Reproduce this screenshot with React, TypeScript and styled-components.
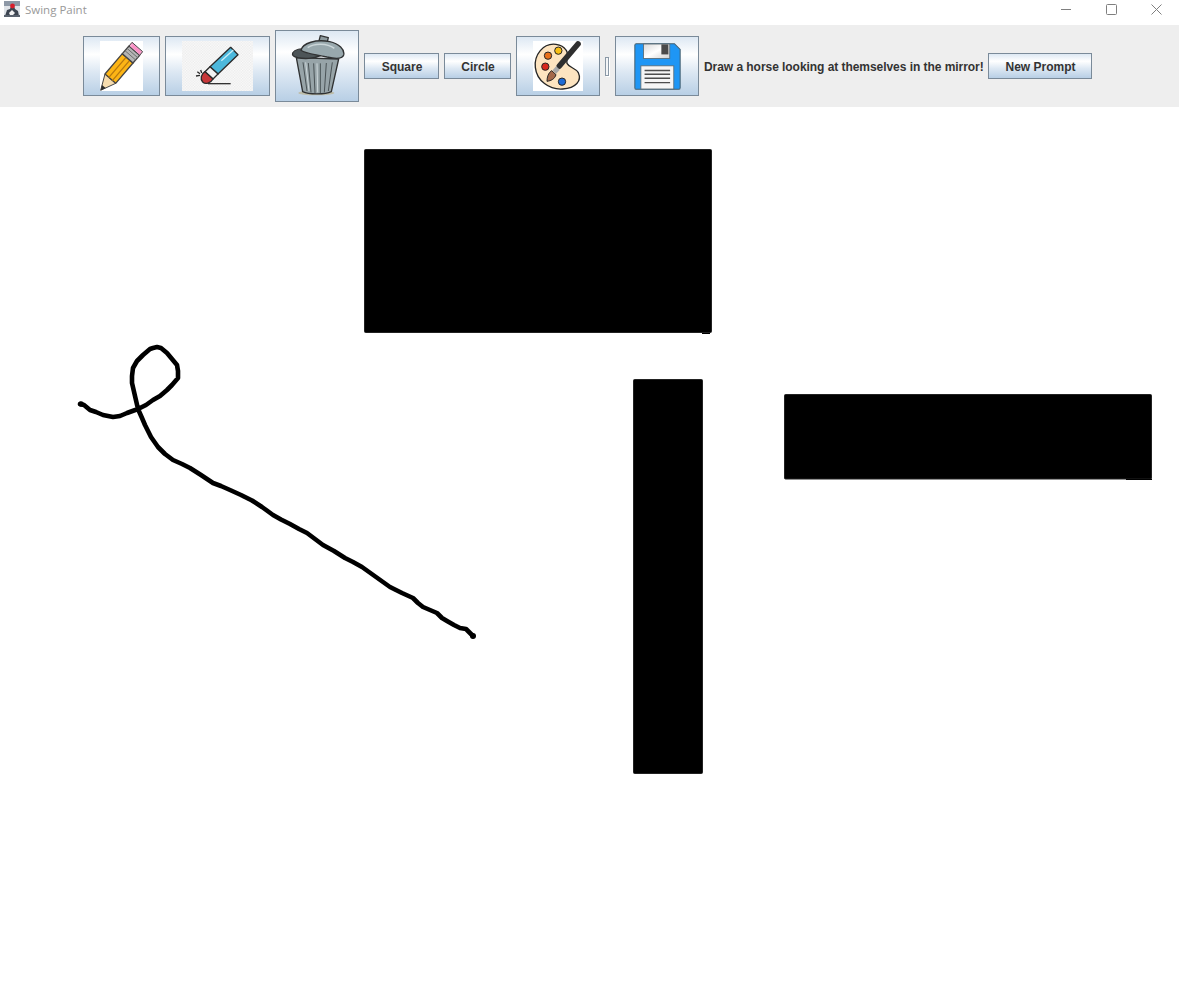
import styled, { createGlobalStyle } from "styled-components";

const GlobalStyle = createGlobalStyle`
  html, body {
    margin: 0;
    padding: 0;
    background: #ffffff;
  }
`;

const Frame = styled.div`
  width: 1179px;
  height: 982px;
  display: flex;
  flex-direction: column;
  overflow: hidden;
  background: #ffffff;
`;

const TitleBar = styled.div`
  height: 25px;
  flex: none;
  display: flex;
  align-items: center;
  padding: 0 0 7px 4px;
  box-sizing: border-box;
  background: #ffffff;
`;

const TitleText = styled.span`
  margin: 2px 0 0 5px;
  font-family: "Open Sans", "Noto Sans", sans-serif;
  font-size: 11.5px;
  line-height: 16px;
  color: #999999;
`;

const WindowControls = styled.div`
  margin-left: auto;
  display: flex;
  align-items: center;
  padding-right: 17px;
  gap: 34px;
`;

const Toolbar = styled.div`
  height: 82px;
  flex: none;
  display: flex;
  align-items: center;
  gap: 5px;
  padding-left: 83px;
  box-sizing: border-box;
  background: #eeeeee;
`;

const MetalButton = styled.button<{ $w: number; $h: number }>`
  width: ${(p) => p.$w}px;
  height: ${(p) => p.$h}px;
  flex: none;
  display: flex;
  align-items: center;
  justify-content: center;
  padding: 0;
  box-sizing: border-box;
  border: 1px solid #7a8a99;
  background: linear-gradient(#dde8f3 0%, #ffffff 30%, #dde8f3 60%, #b8cfe5 100%);
  font-family: "Liberation Sans", Arial, sans-serif;
  font-size: 12px;
  font-weight: 700;
  color: #333333;
`;

const TextButton = styled(MetalButton)`
  padding: 2px 0 0 1px;
`;

const Sliver = styled.div`
  width: 4px;
  height: 19px;
  flex: none;
  margin-right: 1px;
  box-sizing: border-box;
  border: 1px solid #8a98a6;
  background: #f4f6f8;
  box-shadow: 1px 1px 0 #ffffff;
`;

const Prompt = styled.span`
  flex: none;
  width: 279px;
  padding-top: 2px;
  font-family: "Liberation Sans", Arial, sans-serif;
  font-size: 12px;
  font-weight: 700;
  line-height: 16px;
  letter-spacing: -0.05px;
  white-space: nowrap;
  color: #333333;
`;

const Canvas = styled.svg`
  display: block;
  flex: 1;
  width: 1179px;
  background: #ffffff;
`;

const AppIcon = () => (
  <svg width="16" height="16" viewBox="0 0 16 16">
    <rect width="16" height="16" fill="#dfe3e8" />
    <rect x="0" y="0" width="16" height="5" fill="#8d98a6" />
    <path d="M1 15 L3 9 L6 8 L7 5 L10 5 L11 8 L14 10 L15 15 Z" fill="#3c4450" />
    <path d="M5 12 L8 9 L11 12 L9 14 L6 14 Z" fill="#f2f2f2" />
    <circle cx="8.5" cy="5" r="2.4" fill="#d81e2c" />
    <rect x="0" y="14" width="16" height="2" fill="#59626e" />
  </svg>
);

const MinimizeIcon = () => (
  <svg width="11" height="11" viewBox="0 0 11 11">
    <path d="M0 5.5 H10" stroke="#7f7f7f" strokeWidth="1" />
  </svg>
);

const MaximizeIcon = () => (
  <svg width="11" height="11" viewBox="0 0 11 11">
    <rect x="0.5" y="0.5" width="10" height="10" rx="1" fill="none" stroke="#7f7f7f" />
  </svg>
);

const CloseIcon = () => (
  <svg width="11" height="11" viewBox="0 0 11 11">
    <path d="M0.5 0.5 L10.5 10.5 M10.5 0.5 L0.5 10.5" stroke="#7f7f7f" strokeWidth="1" />
  </svg>
);

const PencilIcon = () => (
  <svg width="43" height="50" viewBox="0 0 129 150">
    <rect width="129" height="150" fill="#ffffff" />
    <path d="M15 99 L47 127 L2 148 Z" fill="#f6dcae" stroke="#444444" strokeWidth="3" strokeLinejoin="round" />
    <path d="M2 148 L6 132 L17 141 Z" fill="#2b2b2b" />
    <path d="M15 99 L67 38 L99 66 L47 127 Z" fill="#fdb515" stroke="#444444" strokeWidth="4" strokeLinejoin="round" />
    <path d="M26 110 L78 49 M37 119 L89 58" stroke="#b87a10" strokeWidth="4" />
    <path d="M67 38 L87 15 L119 43 L99 66 Z" fill="#b5b5b5" stroke="#444444" strokeWidth="4" strokeLinejoin="round" />
    <path d="M75 29 L107 57 M81 22 L113 50" stroke="#6e6e6e" strokeWidth="3" />
    <path d="M87 15 L96 4 L128 32 L119 43 Z" fill="#fba3cf" stroke="#444444" strokeWidth="3" strokeLinejoin="round" />
    <path d="M100 10 L122 30 L118 38 L96 17 Z" fill="#f97dbb" opacity="0.5" />
  </svg>
);

const EraserIcon = () => (
  <svg width="71" height="50" viewBox="52 33 213 150">
    <defs>
      <pattern id="checker" width="8" height="8" patternUnits="userSpaceOnUse">
        <rect width="8" height="8" fill="#fbfbfb" />
        <rect width="4" height="4" fill="#ebebeb" />
        <rect x="4" y="4" width="4" height="4" fill="#ebebeb" />
      </pattern>
    </defs>
    <rect x="52" y="33" width="213" height="150" fill="url(#checker)" />
    <path d="M130 161 H198" stroke="#333333" strokeWidth="4" />
    <path d="M198 52 L220 74 L160 132 L136 110 Z" fill="#4cb8dc" stroke="#2a2a2a" strokeWidth="4" strokeLinejoin="round" />
    <path d="M170 92 L206 60" stroke="#c9eef9" strokeWidth="4" />
    <path d="M136 110 L160 132 L145 147 L121 125 Z" fill="#f2f2f2" stroke="#2a2a2a" strokeWidth="4" strokeLinejoin="round" />
    <path d="M121 125 L145 147 C138 160 122 164 114 156 C106 148 109 132 121 125 Z" fill="#c8383a" stroke="#2a2a2a" strokeWidth="4" strokeLinejoin="round" />
    <path d="M94 138 L106 136 M98 125 L106 131 M108 120 L111 129" stroke="#2a2a2a" strokeWidth="4" />
  </svg>
);

const TrashIcon = () => (
  <svg width="55" height="62" viewBox="59 30 165 186">
    <ellipse cx="138" cy="204" rx="54" ry="7" fill="#bdbdaa" />
    <path d="M78 98 L205 102 L183 200 C165 209 115 209 97 200 Z" fill="#97a4a8" stroke="#303233" strokeWidth="4" strokeLinejoin="round" />
    <path d="M98 112 L110 198 M114 114 L122 202 M130 115 L134 204 M150 115 L150 204 M168 114 L162 202 M186 112 L174 198" stroke="#4a5356" strokeWidth="3" />
    <path d="M106 112 L116 198 M140 115 L142 202" stroke="#ccd6d9" strokeWidth="3" />
    <path d="M67 84 C74 72 92 70 108 74 L150 92 C130 102 100 102 82 98 C72 95 64 92 67 84 Z" fill="#4d5558" stroke="#303233" strokeWidth="4" strokeLinejoin="round" />
    <path d="M146 48 L150 32 L174 38 L170 54" fill="#8d9a9f" stroke="#303233" strokeWidth="4" strokeLinejoin="round" />
    <path d="M92 76 C96 54 138 42 178 50 C206 56 224 74 220 90 C216 102 196 102 170 96 C140 88 108 88 92 76 Z" fill="#98a8ad" stroke="#303233" strokeWidth="4" strokeLinejoin="round" />
    <path d="M112 68 C132 54 170 54 192 70" fill="none" stroke="#cbd6d9" strokeWidth="5" />
  </svg>
);

const PaletteIcon = () => (
  <svg width="50" height="50" viewBox="63 33 150 150">
    <rect x="63" y="33" width="150" height="150" fill="#ffffff" />
    <path
      d="M132 43 C93 38 66 75 70 112 C74 152 112 180 152 177 C192 174 210 152 199 128 C192 114 172 114 165 100 C162 85 172 72 162 60 C155 49 145 45 132 43 Z"
      fill="#fde4c0"
      stroke="#262626"
      strokeWidth="4"
      strokeLinejoin="round"
    />
    <circle cx="108" cy="77" r="11" fill="#e8701a" stroke="#262626" strokeWidth="3" />
    <circle cx="139" cy="62" r="11" fill="#f9c015" stroke="#262626" strokeWidth="3" />
    <circle cx="100" cy="110" r="11" fill="#d8281e" stroke="#262626" strokeWidth="3" />
    <circle cx="150" cy="155" r="11" fill="#1e6bd6" stroke="#262626" strokeWidth="3" />
    <path d="M198 42 L142 108" stroke="#2f2f2f" strokeWidth="17" strokeLinecap="round" />
    <path d="M138 114 L127 126" stroke="#a9a9a9" strokeWidth="15" />
    <path d="M119 122 L132 134 C128 147 118 152 105 154 C105 141 109 128 119 122 Z" fill="#a5694a" stroke="#262626" strokeWidth="3" strokeLinejoin="round" />
  </svg>
);

const SaveIcon = () => (
  <svg width="47" height="47" viewBox="102 39 139 140">
    <defs>
      <linearGradient id="shutter" x1="0" y1="0" x2="1" y2="1">
        <stop offset="0" stopColor="#d8d8d8" />
        <stop offset="0.5" stopColor="#ffffff" />
        <stop offset="1" stopColor="#d0d0d0" />
      </linearGradient>
    </defs>
    <path d="M108 41 H222 L239 58 V172 Q239 177 234 177 H108 Q104 177 104 172 V46 Q104 41 108 41 Z" fill="#1e96f5" stroke="#46606f" strokeWidth="3" />
    <rect x="130" y="42" width="78" height="43" fill="url(#shutter)" stroke="#5a6a74" strokeWidth="2.5" />
    <rect x="183" y="43" width="21" height="30" fill="#4a4a4a" />
    <rect x="122" y="107" width="98" height="69" fill="#f5f5f5" stroke="#5a6a74" strokeWidth="2.5" />
    <path d="M133 121 H209 M133 132 H209 M133 144 H209 M133 157 H209" stroke="#4d4d4d" strokeWidth="4" />
  </svg>
);

// the stroke was drawn by hand, so the points are traced rather than smoothed
const scribble =
  "M80 404 L84 405 L90 410 L96 412 L103 415 L113 417 L120 416 L127 413 L138 409 L146 405 L153 400 L160 396 L167 390 L172 385 L178 378 L178 371 L177 365 L172 359 L167 353 L161 348 L157 347 L153 348 L150 349 L143 355 L137 361 L133 368 L132 376 L132 383 L135 396 L138 409 L142 418 L145 425 L151 437 L158 447 L165 454 L173 460 L182 464 L190 468 L201 475 L213 483 L221 486 L230 490 L241 495 L252 500.5 L262 507 L273 515 L281 519.5 L290 524 L299 529 L307 533 L315 539 L323 545 L334 551 L345 558 L353 562 L362 567 L376 577 L390 587 L402 593 L413 598 L418 603 L423 607 L430 610 L437 613 L442 618 L447 621 L454 625 L460 628 L466 629 L470 633 L473 636";

export default function App() {
  return (
    <>
      <GlobalStyle />
      <Frame>
        <TitleBar>
          <AppIcon />
          <TitleText>Swing Paint</TitleText>
          <WindowControls>
            <MinimizeIcon />
            <MaximizeIcon />
            <CloseIcon />
          </WindowControls>
        </TitleBar>
        <Toolbar>
          <MetalButton $w={77} $h={60}>
            <PencilIcon />
          </MetalButton>
          <MetalButton $w={105} $h={60}>
            <EraserIcon />
          </MetalButton>
          <MetalButton $w={84} $h={72}>
            <TrashIcon />
          </MetalButton>
          <TextButton $w={75} $h={26}>Square</TextButton>
          <TextButton $w={67} $h={26}>Circle</TextButton>
          <MetalButton $w={84} $h={60}>
            <PaletteIcon />
          </MetalButton>
          <Sliver />
          <MetalButton $w={84} $h={60}>
            <SaveIcon />
          </MetalButton>
          <Prompt>Draw a horse looking at themselves in the mirror!</Prompt>
          <TextButton $w={104} $h={26}>New Prompt</TextButton>
        </Toolbar>
        <Canvas viewBox="0 107 1179 875" height="875">
          <g fill="#000000" stroke="#222222" strokeWidth="1">
            <rect x="364.5" y="149.5" width="347" height="183" rx="1" />
            <rect x="633.5" y="379.5" width="69" height="394" rx="1" />
            <rect x="784.5" y="394.5" width="367" height="84.5" rx="1" />
          </g>
          <g fill="#000000" shapeRendering="crispEdges">
            <rect x="702" y="333" width="8" height="1" />
            <rect x="1126" y="479" width="26" height="1" />
          </g>
          <path d={scribble} fill="none" stroke="#000000" strokeWidth="4.6" strokeLinejoin="round" strokeLinecap="round" />
          <circle cx="81" cy="404" r="2.8" fill="#000000" />
          <circle cx="473" cy="636" r="3" fill="#000000" />
        </Canvas>
      </Frame>
    </>
  );
}
